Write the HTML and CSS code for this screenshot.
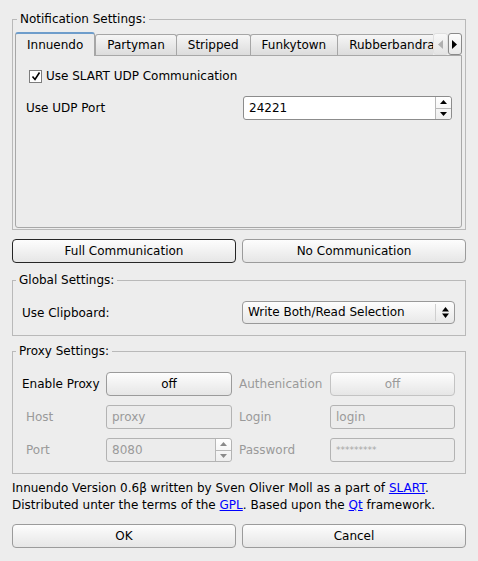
FILE: index.html
```html
<!DOCTYPE html>
<html lang="en">
<head>
  <meta charset="UTF-8" />
  <title>Innuendo Settings</title>
  <link rel="stylesheet" href="styles.css">
</head>
<body>
  <div class="dialog">

    <!-- Notification settings with tab widget -->
    <fieldset class="group notify">
      <legend>Notification Settings:</legend>
      <div class="group-body">
        <div class="tabbar">
          <div class="tablist">
            <div class="tab active">Innuendo</div>
            <div class="tab">Partyman</div>
            <div class="tab">Stripped</div>
            <div class="tab">Funkytown</div>
            <div class="tab">Rubberbandradio</div>
          </div>
          <div class="scroller">
            <span class="scroll-btn off"><svg width="5" height="9"><path d="M5 0v9L0 4.5z" /></svg></span>
            <span class="scroll-btn"><svg width="5" height="9"><path d="M0 0v9l5-4.5z" /></svg></span>
          </div>
        </div>
        <div class="pane">
          <div class="check">
            <span class="box"><svg width="10" height="10"><path d="M1.5 5.5l2.5 3 4.5-7" /></svg></span>
            Use SLART UDP Communication
          </div>
          <div class="port-row">
            <span>Use UDP Port</span>
            <div class="spin port">
              <span class="spin-value">24221</span>
              <span class="spin-btns">
                <span class="spin-up"><svg width="7" height="4"><path d="M0 4h7L3.5 0z" /></svg></span>
                <span><svg width="7" height="4"><path d="M0 0h7L3.5 4z" /></svg></span>
              </span>
            </div>
          </div>
        </div>
      </div>
    </fieldset>

    <div class="btnrow comm">
      <div class="btn default">Full Communication</div>
      <div class="btn">No Communication</div>
    </div>

    <!-- Global settings -->
    <fieldset class="group global">
      <legend>Global Settings:</legend>
      <div class="group-body form-row">
        <span>Use Clipboard:</span>
        <div class="combo">
          <span class="combo-text">Write Both/Read Selection</span>
          <span class="combo-arrow"><svg width="7" height="11"><path d="M0 4.5h7L3.5 0zM0 6.5h7L3.5 11z" /></svg></span>
        </div>
      </div>
    </fieldset>

    <!-- Proxy settings -->
    <fieldset class="group proxy">
      <legend>Proxy Settings:</legend>
      <div class="group-body proxy-grid">
        <span class="lbl">Enable Proxy</span>
        <div class="btn">off</div>
        <span class="lbl right disabled">Authenication</span>
        <div class="btn disabled">off</div>

        <span class="lbl sub disabled">Host</span>
        <div class="edit disabled">proxy</div>
        <span class="lbl right disabled">Login</span>
        <div class="edit disabled">login</div>

        <span class="lbl sub disabled">Port</span>
        <div class="spin disabled">
          <span class="spin-value">8080</span>
          <span class="spin-btns">
            <span class="spin-up"><svg width="7" height="4"><path d="M0 4h7L3.5 0z" /></svg></span>
            <span><svg width="7" height="4"><path d="M0 0h7L3.5 4z" /></svg></span>
          </span>
        </div>
        <span class="lbl right disabled">Password</span>
        <div class="edit disabled pw">*********</div>
      </div>
    </fieldset>

    <p class="about">
      Innuendo Version 0.6β written by Sven Oliver Moll as a part of <a href="#">SLART</a>.<br>
      Distributed unter the terms of the <a href="#">GPL</a>. Based upon the <a href="#">Qt</a> framework.
    </p>

    <div class="btnrow final">
      <div class="btn">OK</div>
      <div class="btn">Cancel</div>
    </div>
  </div>
</body>
</html>
```

FILE: styles.css
```css
* {
  box-sizing: border-box;
}
body {
  margin: 0;
  background: #ededed;
  font-family: "DejaVu Sans", sans-serif;
  font-size: 12px;
  color: #000;
}
.dialog {
  width: 478px;
  padding: 12px 12px 0;
  display: flex;
  flex-direction: column;
}

/* group boxes */
.group {
  margin: 0;
  padding: 0;
  min-width: 0;
  border: 1px solid #b9b9b9;
}
.group legend {
  padding: 0 3px;
  margin-left: 3px;
  line-height: 14px;
}
.notify legend {
  margin-left: 4px;
}
.notify .group-body {
  padding: 6px 3px 1px 2px;
}
.global {
  margin-top: 10px;
}
.global .group-body,
.proxy .group-body {
  padding: 14px 10px 11px 9px;
}
.proxy {
  margin-top: 8px;
}

/* tabs */
.tabbar {
  display: flex;
  height: 24px;
  margin-bottom: -1px;
  position: relative;
  z-index: 1;
}
.tablist {
  flex: 1;
  display: flex;
  align-items: flex-end;
  overflow: hidden;
  white-space: nowrap;
}
.tab {
  height: 21px;
  margin-bottom: 1px;
  margin-left: -1px;
  padding: 0 11px;
  line-height: 20px;
  border: 1px solid #a6a6a6;
  border-bottom: none;
  border-radius: 3px 3px 0 0;
  background: linear-gradient(#f6f6f6, #dcdcdc);
}
.tab.active {
  height: 24px;
  margin: 0;
  line-height: 23px;
  border-top: 2px solid #6e9dcb;
  background: #ececec;
}
.tab.active + .tab {
  margin-left: 0;
}
.scroller {
  width: 29px;
  display: flex;
  height: 22px;
  margin-top: 1px;
}
.scroll-btn {
  flex: 1;
  display: flex;
  align-items: center;
  justify-content: center;
  border: 1px solid #8a8a8a;
  border-radius: 3px;
  background: linear-gradient(#fdfdfd, #e8e8e8);
}
.scroll-btn.off {
  border-color: #e0e0e0;
  background: linear-gradient(#f8f8f8, #e4e4e4);
  fill: #b0b0b0;
}
.pane {
  height: 173px;
  border: 1px solid #a8a8a8;
  border-radius: 0 0 3px 3px;
  background: #ececec;
  padding: 13px 9px 0 10px;
}
.check {
  display: flex;
  align-items: center;
  height: 14px;
  margin-left: 3px;
}
.box {
  width: 13px;
  height: 13px;
  margin-right: 4px;
  border: 1px solid #7d7d7d;
  background: #fff;
  display: flex;
  align-items: center;
  justify-content: center;
}
.box path {
  fill: none;
  stroke: #000;
  stroke-width: 1.6;
}
.port-row {
  margin-top: 13px;
  display: flex;
  align-items: center;
  justify-content: space-between;
}

/* inputs */
.spin,
.edit {
  height: 24px;
  border: 1px solid #8c8c8c;
  border-radius: 3px;
  background: #fff;
}
.spin {
  display: flex;
}
.spin.port {
  width: 209px;
}
.spin-value,
.edit {
  flex: 1;
  padding-left: 5px;
  line-height: 22px;
}
.spin-btns {
  width: 16px;
  border-left: 1px solid #b8b8b8;
  display: flex;
  flex-direction: column;
  background: linear-gradient(#ffffff, #eeeeee);
  border-radius: 0 3px 3px 0;
}
.spin-btns span {
  flex: 1;
  display: flex;
  align-items: center;
  justify-content: center;
}
.spin-btns .spin-up {
  border-bottom: 1px solid #b8b8b8;
}
.spin.disabled,
.edit.disabled {
  background: #ececec;
  border-color: #b3b3b3;
  color: #9a9a9a;
}
.spin.disabled svg {
  fill: #8a8a8a;
}
.edit.pw {
  font-size: 9px;
  color: #a6a6a6;
  letter-spacing: 0;
}

/* buttons */
.btnrow {
  display: flex;
  gap: 6px;
}
.btnrow .btn {
  flex: 1;
}
.comm {
  margin-top: 9px;
}
.final {
  margin-top: 10px;
}
.btn {
  height: 24px;
  line-height: 22px;
  text-align: center;
  border: 1px solid #9b9b9b;
  border-radius: 4px;
  background: linear-gradient(#fdfdfd, #e6e6e6);
}
.btn.default {
  border-color: #262626;
}
.btn.disabled {
  color: #9a9a9a;
  border-color: #c3c3c3;
}

/* global settings row */
.form-row {
  display: flex;
  align-items: center;
  justify-content: space-between;
}
.combo {
  width: 213px;
  height: 23px;
  display: flex;
  border: 1px solid #999;
  border-radius: 4px;
  background: linear-gradient(#fdfdfd, #e8e8e8);
}
.combo-text {
  flex: 1;
  padding-left: 5px;
  line-height: 21px;
}
.combo-arrow {
  width: 19px;
  margin: 2px 0;
  border-left: 1px solid #cfcfcf;
  display: flex;
  align-items: center;
  justify-content: center;
}

/* proxy grid */
.proxy-grid {
  display: grid;
  grid-template-columns: 84px 126px 98px 125px;
  grid-auto-rows: 24px;
  row-gap: 9px;
  align-items: center;
}
.lbl.sub {
  padding-left: 4px;
}
.lbl.right {
  padding-left: 7px;
}
.disabled {
  color: #9a9a9a;
}

/* footer */
.about {
  margin: 6px 0 0;
  line-height: 17px;
}
.about a {
  color: #0000ff;
}
```
